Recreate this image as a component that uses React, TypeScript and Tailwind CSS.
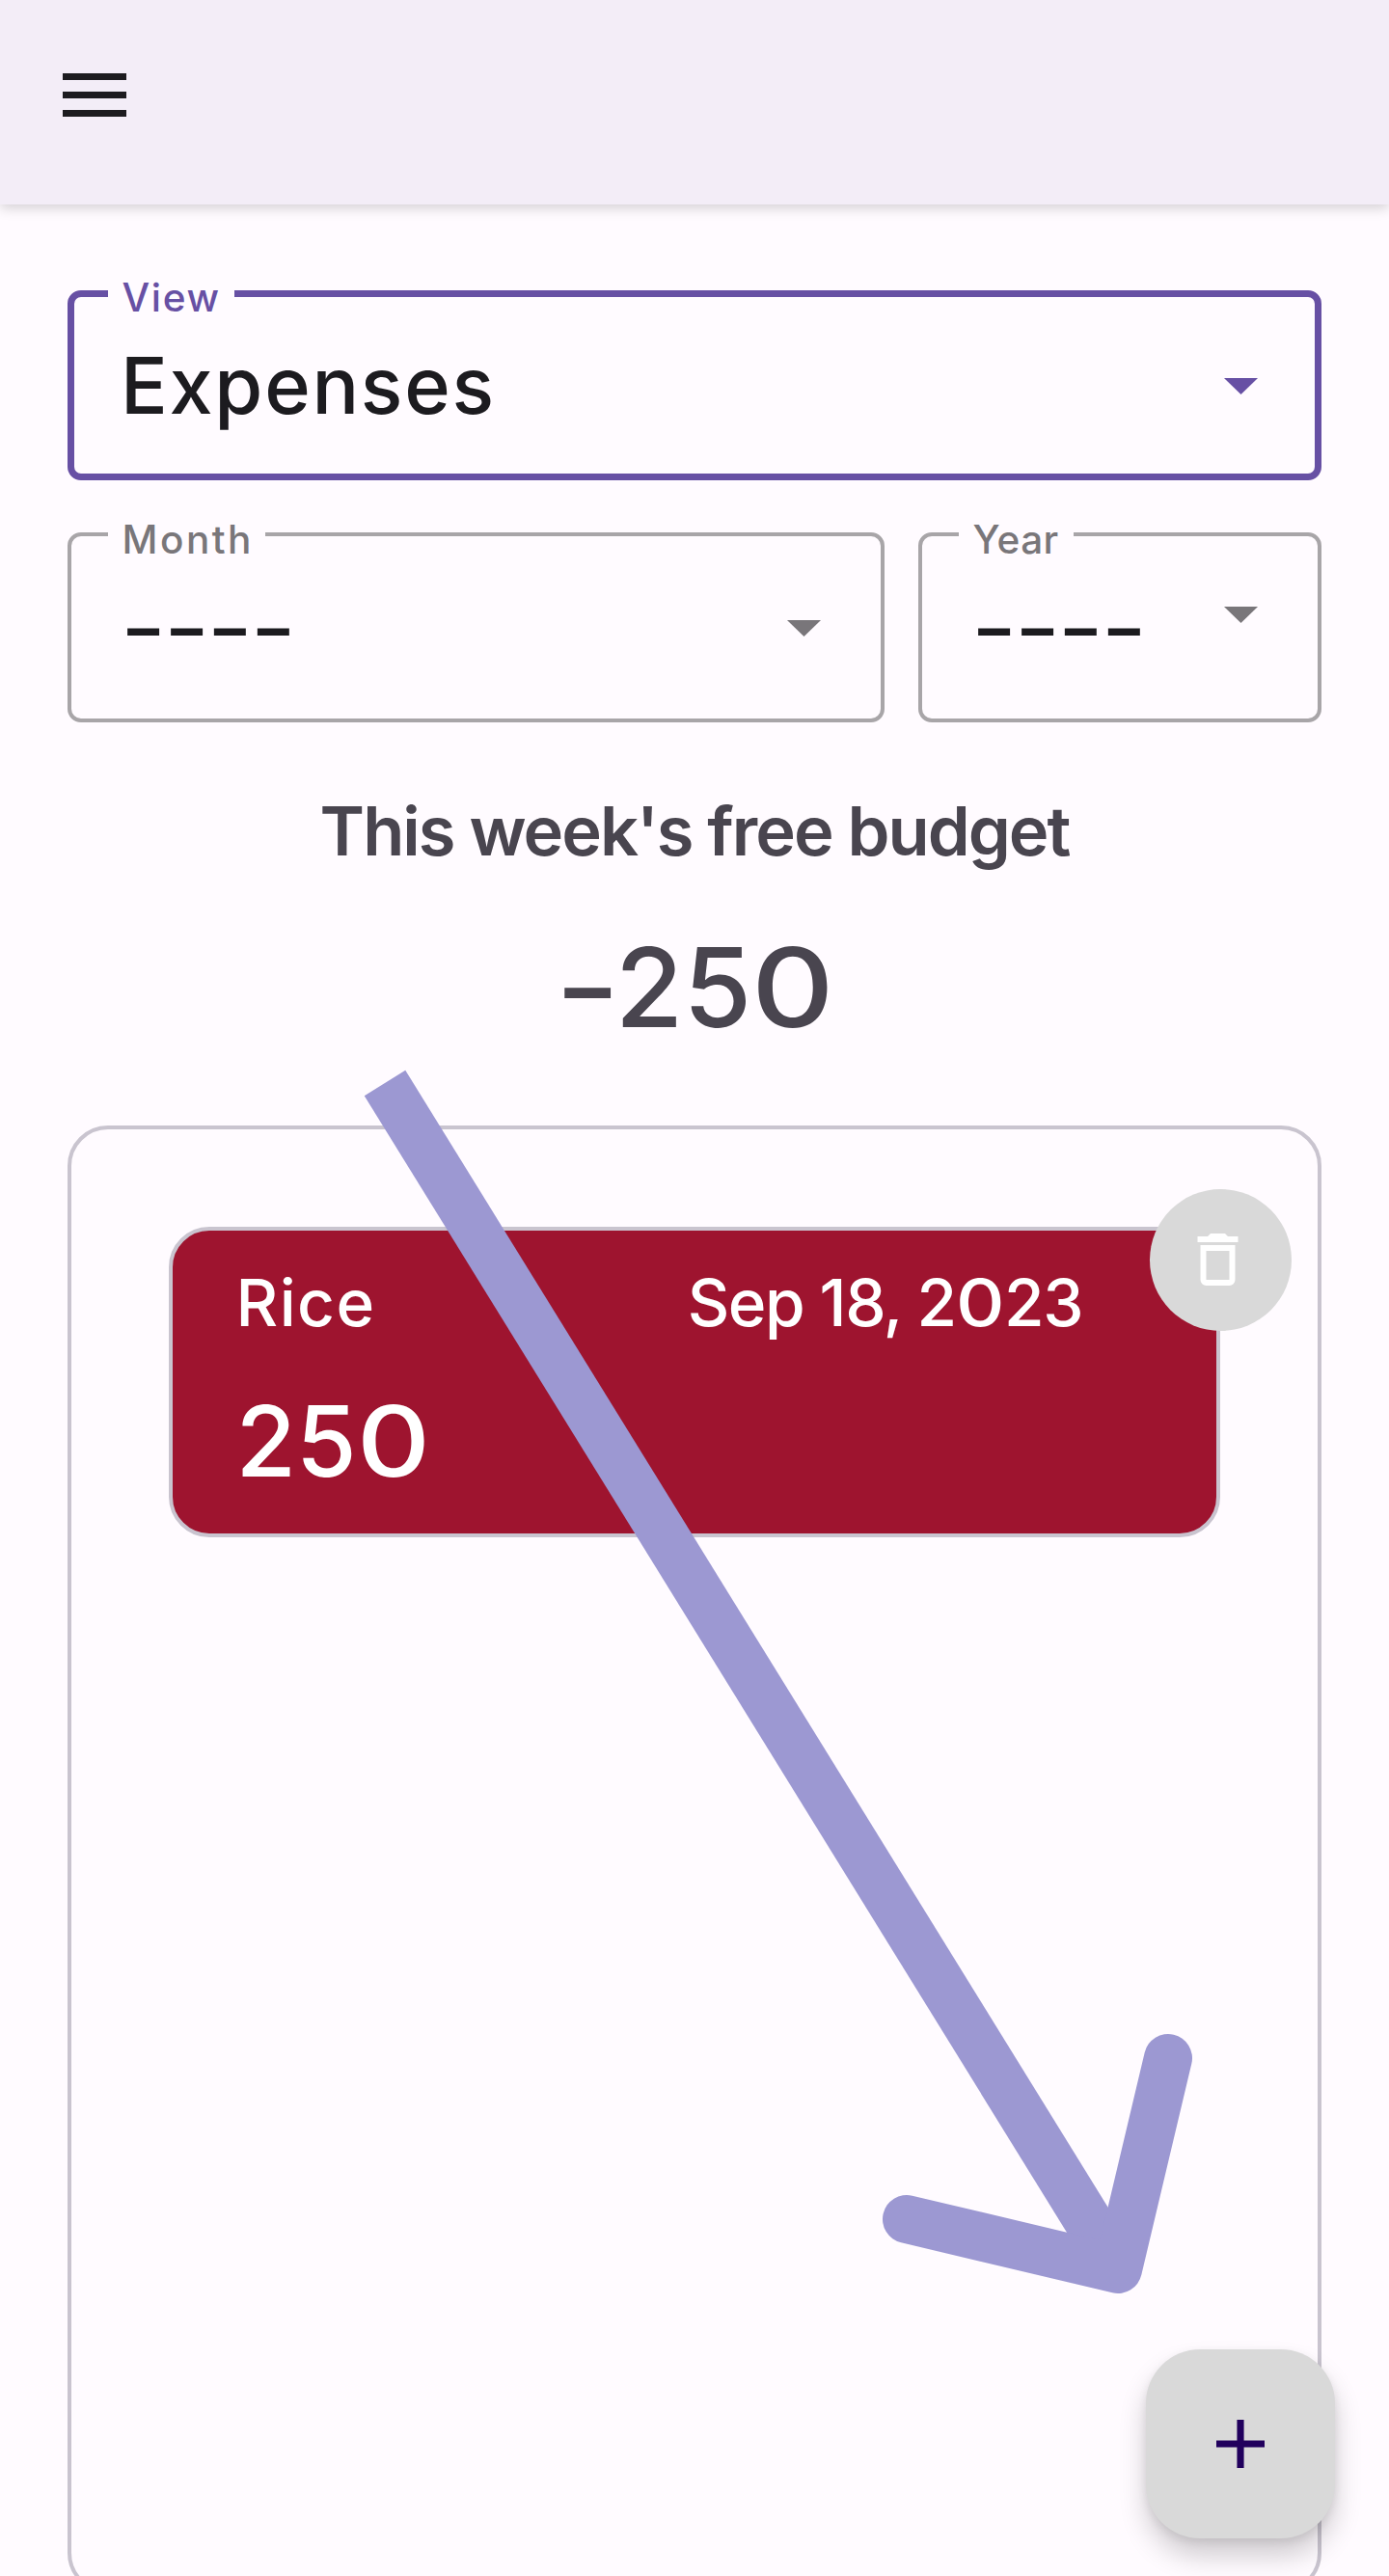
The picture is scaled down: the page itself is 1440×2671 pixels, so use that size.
import type { ReactNode } from "react";

function Caret({ className }: { className: string }) {
  return (
    <svg className={className} width="35" height="17" viewBox="0 0 35 17" fill="currentColor">
      <path d="M0 0H35L17.5 17Z" />
    </svg>
  );
}

function SelectField({
  label,
  notch,
  outline,
  labelStyle,
  caretStyle,
  className,
  children,
}: {
  label: string;
  notch: string;
  outline: string;
  labelStyle: string;
  caretStyle: string;
  className: string;
  children: ReactNode;
}) {
  return (
    <div className={`relative flex h-[197px] justify-between ${className}`}>
      <div className={`absolute inset-0 rounded-[14px] ${outline}`} />
      <div className={`absolute -top-px left-[42px] h-[10px] bg-[#fffbff] ${notch}`} />
      <span className={`absolute -top-[12px] left-[56.5px] text-[40.5px] leading-none font-medium whitespace-nowrap ${labelStyle}`}>
        {label}
      </span>
      <div className="pt-[59px] pl-[55px] text-[81px] leading-none font-medium text-[#1c1b1f]">{children}</div>
      <Caret className={`mr-[66px] ${caretStyle}`} />
    </div>
  );
}

function Dashes() {
  return <span className="inline-block origin-left scale-x-[1.26] tracking-[-1.8px]">----</span>;
}

// The zero is drawn as a wide round figure.
function Zero() {
  return <span className="inline-block origin-left scale-x-[1.16] tracking-normal">0</span>;
}

function ExpenseCard() {
  return (
    <div className="relative h-[322px] rounded-[42px] border-4 border-[#c9c4cf] bg-[#9e142f] pt-[41px] pr-[139px] pl-[65.5px] font-medium text-white">
      <div className="flex justify-between text-[67.5px] leading-none whitespace-nowrap">
        <span className="tracking-[1.4px]">Rice</span>
        <span className="tracking-[-1.5px]">
          Sep 18, 2<span className="mr-[7px]"><Zero /></span>23
        </span>
      </div>
      <div className="mt-[59px] text-[101.5px] leading-none">
        25<Zero />
      </div>
      <button className="absolute -top-[43px] -right-[78px] flex size-[147px] items-center justify-center rounded-full bg-[#d9d9d9]">
        <svg className="-translate-x-[3.5px] -translate-y-px" width="72" height="72" viewBox="0 0 24 24" fill="#ffffff">
          <path d="M6 19a2 2 0 0 0 2 2h8a2 2 0 0 0 2-2V7H6V19M8 9H16V19H8V9M15.5 4L14.5 3H9.5L8.5 4H5V6H19V4H15.5Z" />
        </svg>
      </button>
    </div>
  );
}

export default function App() {
  return (
    <div className="relative flex h-[2671px] w-[1440px] flex-col overflow-hidden bg-[#fffbff] font-['Inter',sans-serif]">
      <header className="h-[212px] shrink-0 bg-[#f3edf7] px-[65px] pt-[76px] shadow-[0_4px_12px_rgba(0,0,0,0.17)]">
        <svg width="66" height="45" viewBox="0 0 66 45" fill="#1c1b1f">
          <path d="M0 0H66V7H0ZM0 19H66V26H0ZM0 38H66V45H0Z" />
        </svg>
      </header>

      <main className="flex flex-col px-[70px] pt-[89px]">
        <SelectField
          label="View"
          notch="w-[131px]"
          className="w-full"
          outline="border-[7px] border-[#6750a4]"
          labelStyle="tracking-[1.65px] text-[#6750a4]"
          caretStyle="mt-[91px] text-[#6750a4]"
        >
          <span className="tracking-[1.7px]">Expenses</span>
        </SelectField>

        <div className="mt-[54px] flex justify-between">
          <SelectField
            label="Month"
            notch="w-[163px]"
            className="w-[847px]"
            outline="border-4 border-[#a8a5a8]"
            labelStyle="tracking-[2.5px] text-[#79767a]"
            caretStyle="mt-[91px] text-[#79767a]"
          >
            <Dashes />
          </SelectField>
          <SelectField
            label="Year"
            notch="w-[119px]"
            className="w-[418px]"
            outline="border-4 border-[#a8a5a8]"
            labelStyle="tracking-[0.4px] text-[#79767a]"
            caretStyle="mt-[77px] text-[#79767a]"
          >
            <Dashes />
          </SelectField>
        </div>

        <h1 className="mt-[78px] text-center text-[70.5px] leading-none font-semibold tracking-[-1.97px] text-[#49454f]">
          This week's free budget
        </h1>
        <div className="mt-[69.5px] flex justify-center text-[114.5px] leading-none font-medium text-[#49454f]">
          <span className="w-[63px] origin-left scale-x-[1.29]">-</span>
          <span>25</span>
          <span className="mr-[12px]"><Zero /></span>
        </div>

        <section className="mt-[85.5px] h-[1522px] shrink-0 rounded-[42px] border-4 border-[#c9c4cf] px-[101px] pt-[101px]">
          <ExpenseCard />
        </section>
      </main>

      <svg className="pointer-events-none absolute inset-0" width="1440" height="2671" fill="none" stroke="#9c98d2" strokeWidth="50">
        <path d="M399 1123L1159 2353" />
        <path d="M1211 2134L1159 2353L940 2301" strokeLinecap="round" strokeLinejoin="round" />
      </svg>

      <button className="absolute right-[56px] bottom-[39px] flex size-[196px] items-center justify-center rounded-[56px] bg-[#d9d9d9] shadow-[0_4px_10px_rgba(0,0,0,0.08),0_18px_28px_rgba(0,0,0,0.19)]">
        <svg width="50" height="50" viewBox="0 0 14 14" fill="#21005d">
          <path d="M14 8H8V14H6V8H0V6H6V0H8V6H14Z" />
        </svg>
      </button>
    </div>
  );
}
